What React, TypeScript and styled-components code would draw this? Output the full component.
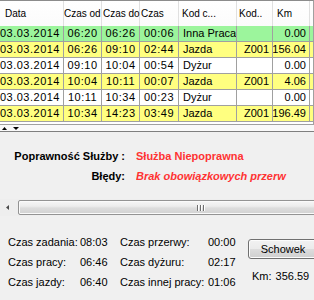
import styled, { createGlobalStyle } from "styled-components";

type Tone = "green" | "yellow" | "white";

type Row = {
  date: string;
  from: string;
  to: string;
  dur: string;
  kind: string;
  code: string;
  km: string;
  tone: Tone;
};

type Column = {
  key: keyof Omit<Row, "tone">;
  title: string;
  width: number;
  headPad: number;
  align: "left" | "center" | "right";
  numeric?: boolean;
};

const COLUMNS: Column[] = [
  { key: "date", title: "Data", width: 64, headPad: 5, align: "right", numeric: true },
  { key: "from", title: "Czas od", width: 38, headPad: 0, align: "center", numeric: true },
  { key: "to", title: "Czas do", width: 38, headPad: 1, align: "center", numeric: true },
  { key: "dur", title: "Czas", width: 39, headPad: 1, align: "center", numeric: true },
  { key: "kind", title: "Kod c...", width: 58, headPad: 3, align: "left" },
  { key: "code", title: "Kod..", width: 36, headPad: 2, align: "right" },
  { key: "km", title: "Km", width: 37, headPad: 4, align: "right" },
];

const ROWS: Row[] = [
  { date: "03.03.2014", from: "06:20", to: "06:26", dur: "00:06", kind: "Inna Praca", code: "", km: "0.00", tone: "green" },
  { date: "03.03.2014", from: "06:26", to: "09:10", dur: "02:44", kind: "Jazda", code: "Z001", km: "156.04", tone: "yellow" },
  { date: "03.03.2014", from: "09:10", to: "10:04", dur: "00:54", kind: "Dyżur", code: "", km: "0.00", tone: "white" },
  { date: "03.03.2014", from: "10:04", to: "10:11", dur: "00:07", kind: "Jazda", code: "Z001", km: "4.06", tone: "yellow" },
  { date: "03.03.2014", from: "10:11", to: "10:34", dur: "00:23", kind: "Dyżur", code: "", km: "0.00", tone: "white" },
  { date: "03.03.2014", from: "10:34", to: "14:23", dur: "03:49", kind: "Jazda", code: "Z001", km: "196.49", tone: "yellow" },
];

const TONES: Record<Tone, string> = {
  green: "#9cf59c",
  yellow: "#ffff80",
  white: "#ffffff",
};

const STATS = [
  ["Czas zadania:", "08:03", "Czas przerwy:", "00:00"],
  ["Czas pracy:", "06:46", "Czas dyżuru:", "02:17"],
  ["Czas jazdy:", "06:40", "Czas innej pracy:", "01:06"],
];

export default function App() {
  return (
    <>
      <GlobalStyle />
      <Window>
        <GridPane>
          <HeaderRow>
            {COLUMNS.map((col) => (
              <HeaderCell key={col.key} $width={col.width} $pad={col.headPad}>
                {col.title}
              </HeaderCell>
            ))}
          </HeaderRow>
          {ROWS.map((row, i) => (
            <DataRow key={i} $tone={row.tone}>
              {COLUMNS.map((col) => (
                <Cell
                  key={col.key}
                  $width={col.width}
                  $align={col.align}
                  $numeric={col.numeric}
                >
                  {row[col.key]}
                </Cell>
              ))}
            </DataRow>
          ))}
        </GridPane>

        <Splitter>
          <svg width="22" height="6" viewBox="0 0 22 6">
            <polygon points="2,5 4.5,2 7,5" fill="#000" />
            <polygon points="13,2 19,2 16,5" fill="#000" />
          </svg>
        </Splitter>

        <StatusPanel>
          <StatusLabel>Poprawność Służby :</StatusLabel>
          <StatusValue>Służba Niepoprawna</StatusValue>
          <StatusLabel>Błędy:</StatusLabel>
          <StatusValue $italic>Brak obowiązkowych przerw</StatusValue>
        </StatusPanel>

        <ScrollBar>
          <ArrowButton>
            <svg width="17" height="17" viewBox="0 0 17 17">
              <polygon points="9,6 6,8.5 9,11" fill="#4a4a4a" />
            </svg>
          </ArrowButton>
          <Thumb>
            <Grip>
              <i />
              <i />
              <i />
            </Grip>
          </Thumb>
        </ScrollBar>

        <StatsPanel>
          <StatsGrid>
            {STATS.map((r) =>
              r.map((text, j) => <StatText key={r[0] + j}>{text}</StatText>)
            )}
          </StatsGrid>
          <SideColumn>
            <Button>Schowek</Button>
            <KmRow>
              <span>Km:</span>
              <span>356.59</span>
            </KmRow>
          </SideColumn>
        </StatsPanel>
      </Window>
    </>
  );
}

const GlobalStyle = createGlobalStyle`
  html, body {
    margin: 0;
    padding: 0;
  }
  body {
    background: #f0f0f0;
    font-family: "Liberation Sans", Arial, sans-serif;
    font-size: 11px;
    color: #000;
    overflow: hidden;
  }
`;

const Window = styled.div`
  width: 314px;
  height: 300px;
  display: flex;
  flex-direction: column;
  overflow: hidden;
  background: #f0f0f0;
`;

const GridPane = styled.div`
  height: 125px;
  box-sizing: border-box;
  border-top: 1px solid #8c8c8c;
  border-right: 1px solid #a0a0a0;
  border-bottom: 1px solid #a0a0a0;
  background: #fff;
  overflow: hidden;
  flex-shrink: 0;
`;

const HeaderRow = styled.div`
  display: flex;
  height: 25px;
  background: linear-gradient(#ffffff, #fbfbfb);
`;

const HeaderCell = styled.div<{ $width: number; $pad: number }>`
  width: ${(p) => p.$width}px;
  flex-shrink: 0;
  box-sizing: border-box;
  padding-left: ${(p) => p.$pad}px;
  border-right: 1px solid #e0e0e0;
  line-height: 25px;
  font-size: 10px;
  white-space: nowrap;
`;

const DataRow = styled.div<{ $tone: Tone }>`
  display: flex;
  height: 16px;
  box-sizing: border-box;
  border-bottom: 1px solid #a0a0a0;
  background: ${(p) => TONES[p.$tone]};
`;

const Cell = styled.div<{
  $width: number;
  $align: "left" | "center" | "right";
  $numeric?: boolean;
}>`
  width: ${(p) => p.$width}px;
  flex-shrink: 0;
  box-sizing: border-box;
  padding: 0 ${(p) => (p.$align === "right" ? 3 : 0)}px 0
    ${(p) => (p.$align === "left" ? 4 : 0)}px;
  border-right: 1px solid #a0a0a0;
  text-align: ${(p) => p.$align};
  line-height: 15px;
  letter-spacing: ${(p) => (p.$numeric ? "0.5px" : "0")};
  white-space: nowrap;
  overflow: hidden;
  direction: ${(p) => (p.$align === "right" ? "rtl" : "ltr")};
`;

const Splitter = styled.div`
  height: 6px;
  flex-shrink: 0;
  background: #f9f9f9;
  border-bottom: 1px solid #7f7f7f;
  line-height: 0;

  svg {
    display: block;
  }
`;

const StatusPanel = styled.div`
  height: 67px;
  flex-shrink: 0;
  box-sizing: border-box;
  padding-top: 14px;
  display: grid;
  grid-template-columns: 125px 161px;
  grid-auto-rows: 20px;
  column-gap: 11px;
  font-weight: bold;
  line-height: 20px;
`;

const StatusLabel = styled.div`
  text-align: right;
  white-space: nowrap;
`;

const StatusValue = styled.div<{ $italic?: boolean }>`
  color: #ff3333;
  font-style: ${(p) => (p.$italic ? "italic" : "normal")};
  white-space: nowrap;
  overflow: hidden;
`;

const ScrollBar = styled.div`
  height: 17px;
  flex-shrink: 0;
  display: flex;
  align-items: center;
  overflow: hidden;
  background: #eeeeee;
`;

const ArrowButton = styled.div`
  width: 18px;
  height: 17px;
  flex-shrink: 0;

  svg {
    display: block;
  }
`;

const Thumb = styled.div`
  width: 364px;
  height: 15px;
  flex-shrink: 0;
  box-sizing: border-box;
  border: 1px solid #939393;
  border-radius: 2px;
  background: linear-gradient(
    #f6f6f6 0%,
    #ececec 40%,
    #dcdcdc 55%,
    #d2d2d2 100%
  );
  box-shadow: inset 0 0 0 1px #fafafa;
  display: flex;
  align-items: center;
  justify-content: center;
`;

const Grip = styled.div`
  display: flex;
  gap: 2px;

  i {
    display: block;
    width: 1px;
    height: 6px;
    background: #6e6e6e;
    box-shadow: 1px 0 0 #fff;
  }
`;

const StatsPanel = styled.div`
  flex: 1;
  display: flex;
  padding: 16px 0 0 8px;
`;

const StatsGrid = styled.div`
  display: grid;
  grid-template-columns: 72px 40px 88px 40px;
  grid-auto-rows: 20px;
  line-height: 20px;
  align-content: start;
`;

const StatText = styled.div`
  white-space: nowrap;
`;

const SideColumn = styled.div`
  display: flex;
  flex-direction: column;
  padding-top: 7px;
`;

const Button = styled.div`
  width: 70px;
  height: 20px;
  box-sizing: border-box;
  border: 1px solid #707070;
  border-radius: 3px;
  background: linear-gradient(
    #f2f2f2 0%,
    #ebebeb 50%,
    #dddddd 51%,
    #cfcfcf 100%
  );
  box-shadow: inset 0 0 0 1px #fcfcfc;
  text-align: center;
  line-height: 18px;
  font-size: 11px;
`;

const KmRow = styled.div`
  display: flex;
  gap: 4px;
  margin-top: 7px;
  padding-left: 4px;
  line-height: 20px;
`;
